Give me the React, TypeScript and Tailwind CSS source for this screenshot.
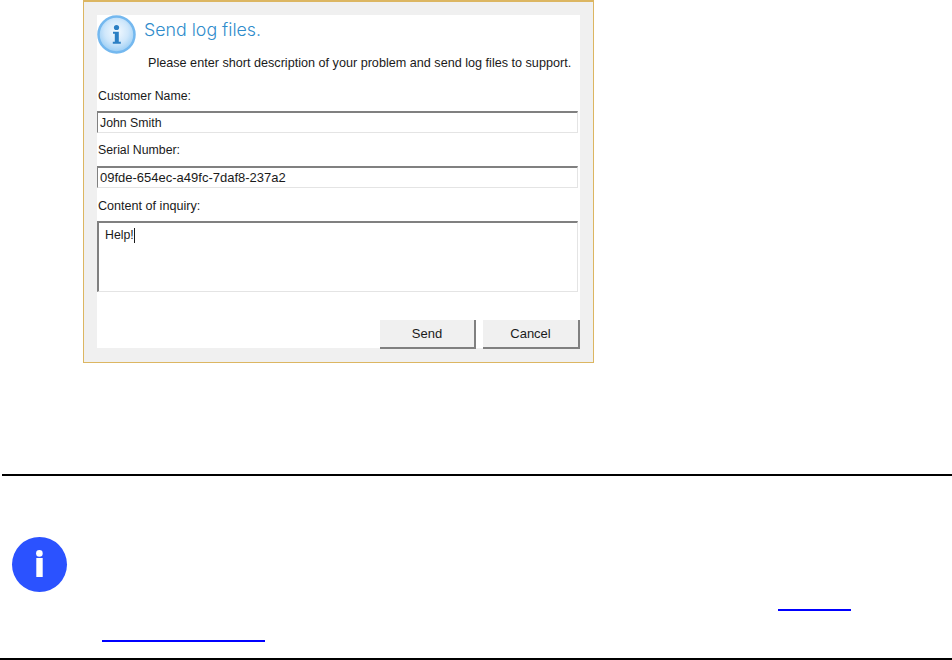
export default function App() {
  const inputCls = "w-[481px] h-[22px] bg-white border-t-2 border-l border-[#808080] border-r border-b border-r-[#e4e4e4] border-b-[#e4e4e4] pl-[2px] flex items-center";
  const btnCls = "h-[29px] -mb-px bg-[#f0f0f0] border-r-2 border-b-2 border-[#808080] font-['Liberation_Sans',sans-serif] text-[13px] leading-[14px] text-[#1a1a1a] pt-[1px]";
  return (
    <div className="w-[952px] h-[660px] bg-white overflow-hidden flex flex-col font-['Liberation_Sans',sans-serif] text-[12.3px] leading-[14px] text-[#1a1a1a]">
      <div className="ml-[83px] w-[511px] h-[363px] border border-[#dcb662] border-t-2 bg-[#f0f0f0] pt-[13px] px-[13px] pb-[14px]">
        <div className="w-[483px] h-[333px] bg-white flex flex-col">
          <div className="flex items-start">
            <svg width="40" height="40" viewBox="0 0 40 40" className="shrink-0">
              <defs>
                <radialGradient id="g" cx="50%" cy="42%" r="55%">
                  <stop offset="0%" stopColor="#f4faff" />
                  <stop offset="60%" stopColor="#cfe7fb" />
                  <stop offset="100%" stopColor="#9dcff5" />
                </radialGradient>
              </defs>
              <circle cx="19.5" cy="19.5" r="18" fill="url(#g)" stroke="#74b8ef" strokeWidth="2.500" />
              <circle cx="19.5" cy="12.5" r="2.600" fill="#2a7fc4" />
              <path d="M16 16.800h5.800v10h2v2h-8v-2h2v-8h-1.800z" fill="#2a7fc4" />
            </svg>
            <div className="ml-[7px] mt-[3px] font-['Inter',sans-serif] font-light text-[17.8px] leading-[24px] text-[#2f8ccb]">Send log files.</div>
          </div>
          <div className="ml-[51px] mt-[1px] h-[14px] whitespace-nowrap text-[12.63px]">Please enter short description of your problem and send log files to support.</div>
          <div className="mt-[19px] px-[1px] h-[14px]">Customer Name:</div>
          <div className={`mt-[8px] ${inputCls}`}>John Smith</div>
          <div className="mt-[10px] px-[1px] h-[14px]">Serial Number:</div>
          <div className={`mt-[9px] ${inputCls} text-[13px]`}>09fde-654ec-a49fc-7daf8-237a2</div>
          <div className="mt-[11px] px-[1px] h-[14px] text-[12.6px]">Content of inquiry:</div>
          <div className="mt-[8px] w-[481px] h-[71px] bg-white border-t-2 border-l-2 border-[#808080] border-r border-b border-r-[#e4e4e4] border-b-[#e4e4e4] pl-[6px] pt-[5px] flex items-start">
            <span>Help!</span>
            <span className="inline-block w-px h-[15px] bg-[#1a1a1a]" />
          </div>
          <div className="mt-auto flex justify-end gap-[7px]">
            <button className={`w-[96px] ${btnCls}`}>Send</button>
            <button className={`w-[97px] ${btnCls}`}>Cancel</button>
          </div>
        </div>
      </div>
      <div className="mt-[111px] ml-[2px] h-[2px] bg-black" />
      <div className="mt-[61px] ml-[12px] w-[55px] h-[55px] rounded-full bg-[#2b52ff] flex items-center justify-center">
        <svg width="55" height="55" viewBox="0 0 55 55">
          <circle cx="27.400" cy="16.400" r="3.300" fill="#fff" />
          <rect x="24.300" y="21" width="6.400" height="19" fill="#fff" />
        </svg>
      </div>
      <div className="mt-[17px] ml-[778px] w-[73px] h-[2px] bg-[#0000ff]" />
      <div className="mt-[29px] ml-[102px] w-[163px] h-[2px] bg-[#0000ff]" />
      <div className="mt-auto h-[2px] bg-black" />
    </div>
  );
}
